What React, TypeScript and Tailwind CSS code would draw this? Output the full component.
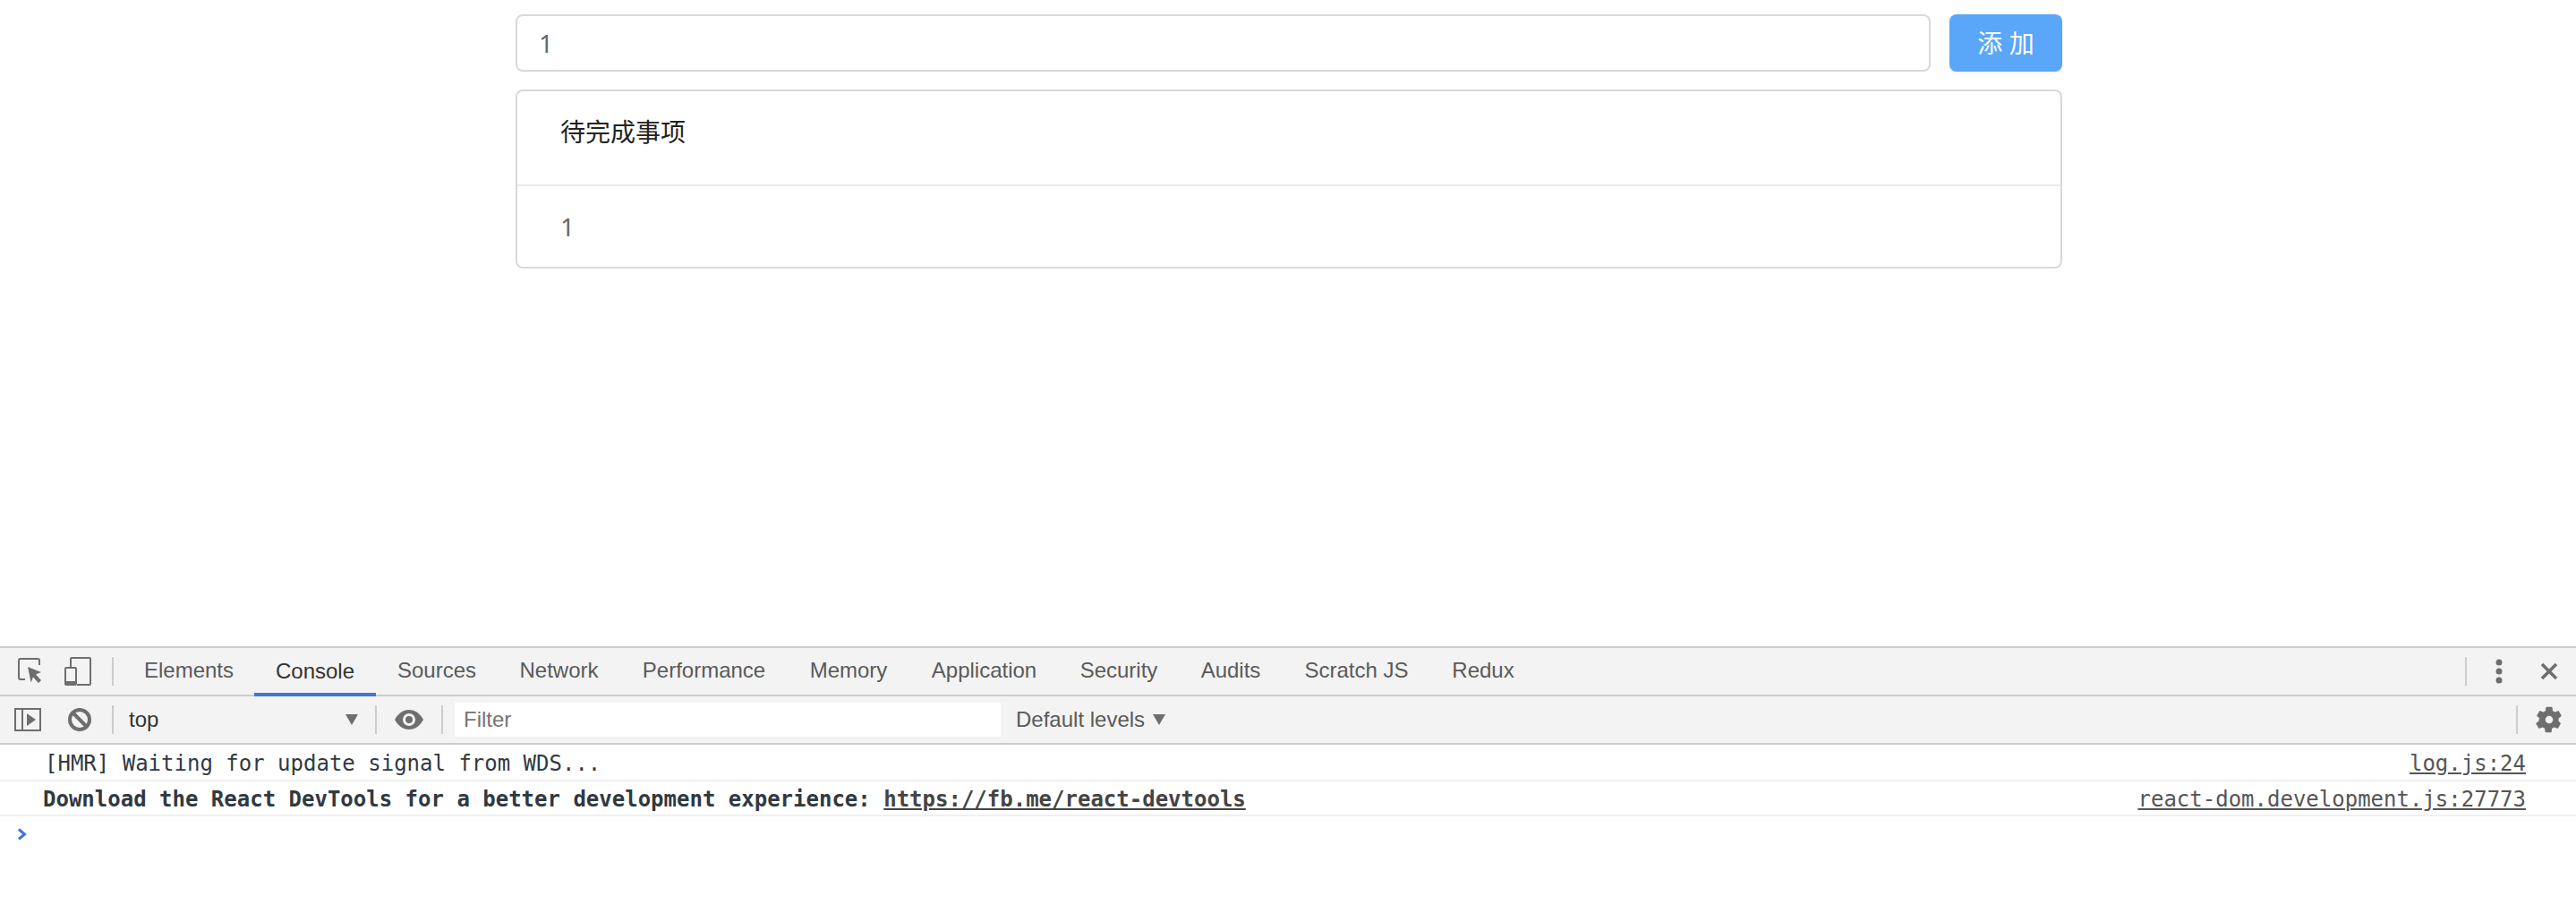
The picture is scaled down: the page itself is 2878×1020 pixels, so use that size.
const mono = "font-['DejaVu_Sans_Mono','Liberation_Mono',monospace]";

const tabs = [
  { label: "Elements", width: "w-[146px]" },
  { label: "Console", width: "w-[136px]" },
  { label: "Sources", width: "w-[136px]" },
  { label: "Network", width: "w-[137px]" },
  { label: "Performance", width: "w-[187px]" },
  { label: "Memory", width: "w-[136px]" },
  { label: "Application", width: "w-[167px]" },
  { label: "Security", width: "w-[134px]" },
  { label: "Audits", width: "w-[116px]" },
  { label: "Scratch JS", width: "w-[165px]" },
  { label: "Redux", width: "w-[118px]" },
];

function Sep({ className = "" }: { className?: string }) {
  return <div className={`w-[2px] h-[32px] bg-[#cdcdcd] shrink-0 ${className}`} />;
}

function InspectIcon() {
  return (
    <svg width="28" height="30" viewBox="0 0 28 30" className="shrink-0">
      <path d="M8 24H3a2 2 0 0 1-2-2V3a2 2 0 0 1 2-2h19a2 2 0 0 1 2 2v5" fill="none" stroke="#6e6e6e" strokeWidth="2" />
      <path d="M11 10l15 6-6 2.4 6 6.6-3 3-6-6.6-2.4 6z" fill="#6e6e6e" />
    </svg>
  );
}

function DeviceIcon() {
  return (
    <svg width="30" height="32" viewBox="0 0 30 32" className="shrink-0">
      <path d="M7 11V2a1 1 0 0 1 1-1h20a1 1 0 0 1 1 1v28a1 1 0 0 1-1 1H14" fill="none" stroke="#6e6e6e" strokeWidth="2" />
      <rect x="1" y="12" width="12" height="19" rx="1" fill="none" stroke="#6e6e6e" strokeWidth="2" />
      <rect x="1" y="27" width="12" height="4" fill="#6e6e6e" />
    </svg>
  );
}

function SidebarIcon() {
  return (
    <svg width="30" height="26" viewBox="0 0 30 26" className="shrink-0">
      <rect x="1" y="1" width="28" height="24" fill="none" stroke="#6e6e6e" strokeWidth="2" />
      <path d="M9 1v24" stroke="#6e6e6e" strokeWidth="2" />
      <path d="M14 6l10 7-10 7z" fill="#6e6e6e" />
    </svg>
  );
}

function BlockIcon() {
  return (
    <svg width="26" height="26" viewBox="0 0 26 26" className="shrink-0">
      <circle cx="13" cy="13" r="11" fill="none" stroke="#6e6e6e" strokeWidth="4" />
      <path d="M5.5 5.5l15 15" stroke="#6e6e6e" strokeWidth="4" />
    </svg>
  );
}

function EyeIcon() {
  return (
    <svg width="32" height="22" viewBox="0 0 32 22" className="shrink-0">
      <path d="M16 0C9 0 3.500 4.500 0 11c3.500 6.500 9 11 16 11s12.500-4.500 16-11C28.500 4.500 23 0 16 0z" fill="#6e6e6e" />
      <circle cx="16" cy="11" r="7" fill="#f3f3f3" />
      <circle cx="16" cy="11" r="4" fill="#6e6e6e" />
    </svg>
  );
}

function Caret({ className = "" }: { className?: string }) {
  return (
    <svg width="14" height="12" viewBox="0 0 14 12" className={`shrink-0 ${className}`}>
      <path d="M0 0h14L7 12z" fill="#6e6e6e" />
    </svg>
  );
}

function GearIcon() {
  return (
    <svg width="34" height="34" viewBox="0 0 24 24" className="shrink-0">
      <path
        fillRule="evenodd"
        fill="#6e6e6e"
        d="M19.400 13c.05-.33.1-.66.1-1s-.05-.67-.1-1l2.100-1.650c.2-.15.25-.42.12-.64l-2-3.460c-.12-.22-.39-.31-.61-.22l-2.490 1c-.52-.39-1.060-.73-1.690-.98l-.37-2.650A.506.506 0 0 0 14 2h-4c-.25 0-.46.18-.5.42l-.37 2.650c-.63.25-1.170.59-1.690.98l-2.490-1c-.22-.09-.49 0-.61.22l-2 3.460c-.13.22-.07.49.12.64L4.570 11c-.04.33-.7.66-.7 1s.03.67.07 1l-2.110 1.650c-.19.15-.25.42-.12.64l2 3.460c.12.22.39.31.61.22l2.490-1c.52.39 1.060.73 1.690.98l.37 2.650c.04.24.25.42.5.42h4c.25 0 .46-.18.5-.42l.37-2.650c.63-.25 1.170-.59 1.690-.98l2.490 1c.22.09.49 0 .61-.22l2-3.460c.13-.22.08-.49-.12-.64L19.400 13zM12 15a3 3 0 1 1 0-6 3 3 0 0 1 0 6z"
      />
    </svg>
  );
}

export default function App() {
  return (
    <div className="h-[1020px] flex flex-col bg-white overflow-hidden font-['Liberation_Sans',Arial,sans-serif]">
      {/* page */}
      <div className="h-[722px] shrink-0 pt-4 pl-[576px] font-['Noto_Sans','Noto_Sans_CJK_SC',sans-serif]">
        <div className="w-[1728px] flex gap-[21px]">
          <div className="flex-1 h-16 flex items-center pl-6 border-2 border-[#d9d9d9] rounded-lg text-[28px] text-[#666666]">1</div>
          <div className="w-[126px] h-16 flex items-center justify-center rounded-lg bg-[#5aa6f9] text-[28px] text-white shadow-[0_2px_4px_rgba(0,0,0,0.06)]">
            添 加
          </div>
        </div>
        <div className="w-[1728px] h-[200px] mt-5 border-2 border-[#d9d9d9] rounded-lg flex flex-col">
          <div className="h-[104px] shrink-0 flex items-center pl-12 pb-[14px] text-[28px] text-[#222222]">待完成事项</div>
          <div className="flex-1 flex items-center pl-12 border-t-2 border-[#ebebeb] text-[28px] text-[#666666]">1</div>
        </div>
      </div>

      {/* devtools */}
      <div className="flex-1 border-t-2 border-[#cccccc] flex flex-col">
        <div className="h-[54px] shrink-0 flex items-center bg-[#f3f3f3] border-b-2 border-[#cccccc]">
          <div className="w-[72px] pl-5 shrink-0"><InspectIcon /></div>
          <DeviceIcon />
          <Sep className="ml-[23px]" />
          <div className="flex h-[54px] ml-[11px] -mb-[2px] self-start">
            {tabs.map((t) =>
              t.label === "Console" ? (
                <div key={t.label} className={`${t.width} h-[54px] flex items-center justify-center pt-[2px] text-[24px] text-[#333333] border-b-4 border-[#3b78dc]`}>{t.label}</div>
              ) : (
                <div key={t.label} className={`${t.width} h-[54px] flex items-center justify-center text-[24px] text-[#5a5a5a] border-b-4 border-transparent`}>{t.label}</div>
              )
            )}
          </div>
          <div className="flex-1" />
          <Sep />
          <div className="w-[72px] flex justify-center shrink-0">
            <svg width="8" height="28" viewBox="0 0 8 28">
              <circle cx="4" cy="4" r="3.500" fill="#6e6e6e" />
              <circle cx="4" cy="14" r="3.500" fill="#6e6e6e" />
              <circle cx="4" cy="24" r="3.500" fill="#6e6e6e" />
            </svg>
          </div>
          <div className="w-[40px] shrink-0 flex justify-center">
            <svg width="20" height="20" viewBox="0 0 20 20">
              <path d="M2 2l16 16M18 2L2 18" stroke="#6e6e6e" strokeWidth="3.500" />
            </svg>
          </div>
          <div className="w-[10px] shrink-0" />
        </div>

        <div className="h-[54px] shrink-0 flex items-center bg-[#f3f3f3] border-b-2 border-[#cccccc]">
          <div className="w-[76px] pl-4 shrink-0"><SidebarIcon /></div>
          <BlockIcon />
          <Sep className="ml-[23px]" />
          <div className="w-[292px] pl-[17px] pr-[19px] flex items-center justify-between text-[24px] text-[#333333] shrink-0">
            <span>top</span>
            <Caret />
          </div>
          <Sep />
          <div className="w-[72px] flex justify-center shrink-0"><EyeIcon /></div>
          <Sep />
          <div className="w-[610px] h-[38px] ml-[13px] pl-[10px] flex items-center bg-white text-[24px] text-[#757575] shrink-0">Filter</div>
          <div className="ml-[17px] flex items-center gap-[9px] text-[24px] text-[#5a5a5a]">
            <span>Default levels</span>
            <Caret />
          </div>
          <div className="flex-1" />
          <Sep />
          <div className="w-[65px] flex pl-[18px] shrink-0"><GearIcon /></div>
        </div>

        <div className={`h-[41px] shrink-0 flex items-center justify-between pl-[50px] pr-[56px] pt-[2px] border-b-2 border-[#f0f0f0] text-[24px] text-[#303942] ${mono}`}>
          <span>[HMR] Waiting for update signal from WDS...</span>
          <span className="underline text-[#555555]">log.js:24</span>
        </div>
        <div className={`h-[39px] shrink-0 flex items-center justify-between pl-[48px] pr-[56px] pt-[2px] border-b-2 border-[#f0f0f0] text-[24px] text-[#303942] ${mono}`}>
          <span className="font-bold">
            Download the React DevTools for a better development experience: <span className="underline text-[#444444]">https://fb.me/react-devtools</span>
          </span>
          <span className="underline text-[#555555]">react-dom.development.js:27773</span>
        </div>
        <div className="pl-[19px] pt-[13px]">
          <svg width="11" height="14" viewBox="0 0 11 14">
            <path d="M2 1.500L8.500 7 2 12.500" fill="none" stroke="#3b78dc" strokeWidth="3" />
          </svg>
        </div>
      </div>
    </div>
  );
}
